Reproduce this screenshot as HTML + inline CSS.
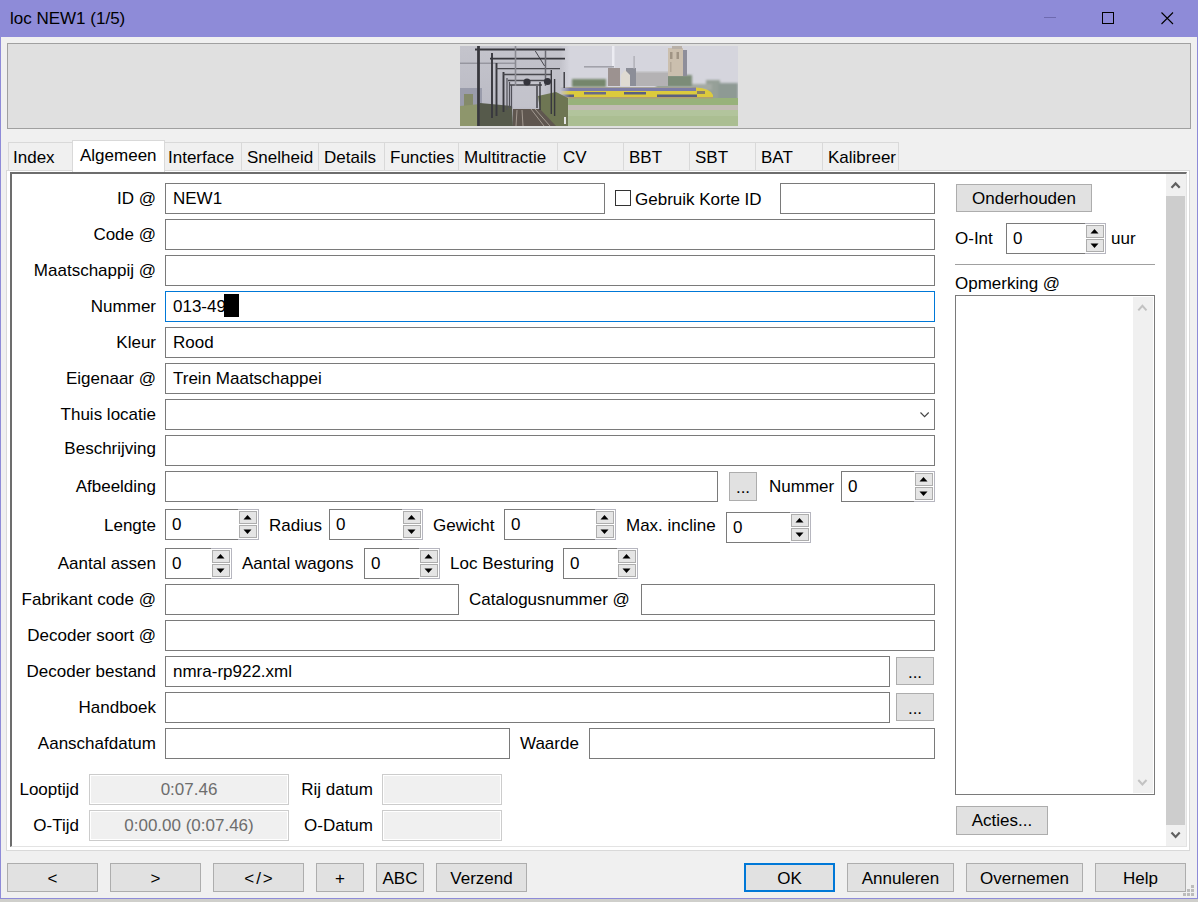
<!DOCTYPE html>
<html><head><meta charset="utf-8"><style>
html,body{margin:0;padding:0;width:1198px;height:902px;overflow:hidden;background:#f0f0f0}
body>div,body>svg,#r>div,#r>svg{position:absolute}
#r{position:absolute;left:0;top:0;width:1198px;height:902px;overflow:hidden}
#r div, #r svg{position:absolute}
#r div svg{position:static}
.t{font-family:"Liberation Sans",sans-serif;font-size:17.0px;line-height:20px;white-space:pre;color:#000}
</style></head><body><div id="r">
<div style="left:0px;top:0px;width:1198px;height:899px;background:#f0f0f0"></div>
<div style="left:0px;top:899px;width:1198px;height:3px;background:#cfcfcb"></div>
<div style="left:0px;top:0px;width:1198px;height:37px;background:#8e8bd8"></div>
<div style="left:0px;top:0px;width:1px;height:899px;background:#8e8bd8"></div>
<div style="left:1197px;top:0px;width:1px;height:899px;background:#8e8bd8"></div>
<div style="left:0px;top:898px;width:1198px;height:1px;background:#8e8bd8"></div>
<div class="t" style="left:10px;top:9px;color:#000;">loc NEW1 (1/5)</div>
<div style="left:1044px;top:17px;width:12px;height:1px;background:#6e6ab0"></div>
<div style="left:1102px;top:12px;width:12px;height:12px;border:1px solid #000;box-sizing:border-box"></div>
<svg style="left:1161px;top:12px" width="13" height="13"><path d="M0.5 0.5 L12 12 M12 0.5 L0.5 12" stroke="#000" stroke-width="1.1"/></svg>
<div style="left:7px;top:43px;width:1184px;height:86px;border:1px solid #a0a0a0;background:#e0e0e0;box-sizing:border-box"></div>
<div style="left:460px;top:46px;width:278px;height:80px;overflow:hidden"><svg width="278" height="80" viewBox="0 0 278 80">
<defs>
<linearGradient id="lsky" x1="0" y1="0" x2="0" y2="1"><stop offset="0" stop-color="#c4c4cc"/><stop offset="1" stop-color="#b8b8c2"/></linearGradient>
<linearGradient id="fade" x1="0" y1="0" x2="1" y2="0"><stop offset="0" stop-color="#c2c2ca" stop-opacity="1"/><stop offset="1" stop-color="#c2c2ca" stop-opacity="0"/></linearGradient>
<filter id="bl" x="0" y="0" width="100%" height="100%"><feGaussianBlur stdDeviation="0.55"/></filter>
<filter id="bl2" x="-20%" y="-20%" width="140%" height="140%"><feGaussianBlur stdDeviation="1.2"/></filter>
</defs>
<g filter="url(#bl)">
<rect width="278" height="80" fill="#d5d5dd"/>
<!-- right scene: distant trees -->
<g filter="url(#bl2)">
<rect x="112" y="33" width="34" height="8" fill="#74866c"/>
<rect x="196" y="29" width="36" height="12" fill="#7c8c78"/>
<rect x="246" y="34" width="14" height="20" fill="#96a098"/>
<rect x="258" y="37" width="20" height="17" fill="#8e9a94"/>
<rect x="232" y="38" width="20" height="6" fill="#a4aaa4"/>
</g>
<!-- church nave -->
<rect x="176" y="25" width="32" height="15" fill="#b4b2b4"/>
<rect x="176" y="25" width="32" height="1.5" fill="#c8c8cc"/>
<!-- tower -->
<rect x="208" y="2" width="15" height="28" fill="#cbbfae"/>
<rect x="223" y="4" width="4" height="26" fill="#8e8e9a"/>
<rect x="212" y="0" width="10" height="3" fill="#b8b0a8"/>
<rect x="210" y="6" width="2.5" height="7" fill="#a09484"/>
<rect x="216.5" y="6" width="2.5" height="7" fill="#a09484"/>
<rect x="210" y="16" width="1.5" height="10" fill="#b4a898"/>
<!-- windmill & church front -->
<rect x="148" y="22" width="12" height="18" fill="#9c9290"/>

<rect x="166" y="22" width="10" height="18" fill="#8c8e98"/>
<path d="M161 40 V29 L165 24 L170 29 V40 Z" fill="#dedad2"/>
<rect x="173.5" y="10" width="1.2" height="13" fill="#a8a8b0"/>
<rect x="152" y="0" width="2.5" height="22" fill="#ececf2"/>
<rect x="124" y="20" width="30" height="1.6" fill="#a2a2aa"/>
<!-- field -->
<rect x="96" y="52" width="182" height="7" fill="#98b27a"/>
<rect x="96" y="59" width="182" height="5" fill="#c2bcb4"/>
<rect x="96" y="64" width="182" height="16" fill="#b2c49c"/>
<rect x="96" y="70" width="182" height="10" fill="#a8bc8e" opacity="0.7"/>
<!-- train -->
<path d="M96 41.5 H236 Q250 42 253 49 V52 H96 Z" fill="#dcca3e"/>
<rect x="96" y="41.5" width="140" height="3.5" fill="#7c7ca6"/>
<rect x="96" y="48.5" width="18" height="2.5" fill="#5a5e80"/>
<rect x="164" y="46" width="22" height="2.5" fill="#5a5e80"/>
<rect x="197" y="48.5" width="40" height="2.5" fill="#5a5e80"/>
<rect x="124" y="46" width="22" height="2.5" fill="#6a6a88"/>
<rect x="237" y="45" width="8" height="3" fill="#8a8068"/>
<rect x="96" y="51" width="157" height="1.5" fill="#b0a070"/>
<!-- left scene -->
<rect x="0" y="0" width="100" height="80" fill="url(#lsky)"/>
<rect x="100" y="0" width="10" height="80" fill="url(#fade)"/>
<rect x="52" y="32" width="34" height="30" fill="#c8c8d0" opacity="0.6" filter="url(#bl2)"/>
<rect x="0" y="42" width="22" height="18" fill="#9a9cab"/>
<rect x="4" y="48" width="9" height="14" fill="#848a6a"/>
<path d="M0 60 L20 58 L20 80 L0 80 Z" fill="#8e966c"/>
<path d="M20 57 L52 60 L53 80 L20 80 Z" fill="#565a4c"/>
<path d="M78 50 L96 46 L108 52 L108 80 L92 80 L80 64 Z" fill="#6e7652"/>
<path d="M53 63 L80 63 L96 80 L53 80 Z" fill="#5e5650"/>
<path d="M57 64 L56 80 M62 64 L63 80 M71 63 L84 80 M75 63 L90 80" stroke="#aaa096" stroke-width="0.9"/>
<rect x="104" y="71" width="2" height="7" fill="#e4e4e4"/>
</g>
<g stroke="#38383e" fill="none">
<path d="M0 17.2 H56" stroke="#74747c" stroke-width="0.8"/>
<path d="M18.5 0 V80" stroke-width="2.8"/>
<path d="M32 7 V72 M36.5 17 V70 M43.5 26 V66" stroke-width="1.9"/>
<path d="M47 32 V64 M49.5 36 V62 M51.5 39 V62" stroke-width="1.2" stroke="#505058"/>
<path d="M15 3.5 H105" stroke-width="2.2"/>
<path d="M30 12.7 H105" stroke-width="1.8"/>
<path d="M36 22.7 H100 M43 28.5 H92 M48 34.5 H86 M50 39 H82" stroke-width="1.3" stroke="#48484e"/>
<path d="M85.5 4 V40" stroke="#6a6a72" stroke-width="1.5"/>
<path d="M91.3 24 V68 M94.6 33 V70 M104.2 26 V42 M80 36 V64 M77 40 V62" stroke-width="1.4"/>
<path d="M75.3 5 L84.6 20" stroke-width="0.9"/>
<path d="M55.5 0 V40" stroke="#8a8a92" stroke-width="1.6"/>
</g>
<circle cx="67" cy="36" r="3.6" fill="#34343c"/>
<circle cx="87.5" cy="35.5" r="3.6" fill="#34343c"/>
</svg>
</div>
<div style="left:8px;top:142px;width:65px;height:29px;border:1px solid #d9d9d9;background:#f0f0f0;box-sizing:border-box"></div>
<div style="left:164px;top:142px;width:78px;height:29px;border:1px solid #d9d9d9;background:#f0f0f0;box-sizing:border-box"></div>
<div style="left:241px;top:142px;width:78px;height:29px;border:1px solid #d9d9d9;background:#f0f0f0;box-sizing:border-box"></div>
<div style="left:318px;top:142px;width:67px;height:29px;border:1px solid #d9d9d9;background:#f0f0f0;box-sizing:border-box"></div>
<div style="left:384px;top:142px;width:75px;height:29px;border:1px solid #d9d9d9;background:#f0f0f0;box-sizing:border-box"></div>
<div style="left:458px;top:142px;width:100px;height:29px;border:1px solid #d9d9d9;background:#f0f0f0;box-sizing:border-box"></div>
<div style="left:557px;top:142px;width:67px;height:29px;border:1px solid #d9d9d9;background:#f0f0f0;box-sizing:border-box"></div>
<div style="left:623px;top:142px;width:67px;height:29px;border:1px solid #d9d9d9;background:#f0f0f0;box-sizing:border-box"></div>
<div style="left:689px;top:142px;width:67px;height:29px;border:1px solid #d9d9d9;background:#f0f0f0;box-sizing:border-box"></div>
<div style="left:755px;top:142px;width:68px;height:29px;border:1px solid #d9d9d9;background:#f0f0f0;box-sizing:border-box"></div>
<div style="left:822px;top:142px;width:77px;height:29px;border:1px solid #d9d9d9;background:#f0f0f0;box-sizing:border-box"></div>
<div style="left:6px;top:170px;width:1184px;height:681px;border:1px solid #d9d9d9;background:#fff;box-sizing:border-box"></div>
<div style="left:72px;top:140px;width:93px;height:32px;border:1px solid #d9d9d9;border-bottom:none;background:#fff;box-sizing:border-box"></div>
<div class="t" style="left:13px;top:148px;color:#000;">Index</div>
<div class="t" style="left:80px;top:146px;color:#000;">Algemeen</div>
<div class="t" style="left:168px;top:148px;color:#000;">Interface</div>
<div class="t" style="left:247px;top:148px;color:#000;">Snelheid</div>
<div class="t" style="left:324px;top:148px;color:#000;">Details</div>
<div class="t" style="left:390px;top:148px;color:#000;">Functies</div>
<div class="t" style="left:464px;top:148px;color:#000;">Multitractie</div>
<div class="t" style="left:563px;top:148px;color:#000;">CV</div>
<div class="t" style="left:629px;top:148px;color:#000;">BBT</div>
<div class="t" style="left:695px;top:148px;color:#000;">SBT</div>
<div class="t" style="left:761px;top:148px;color:#000;">BAT</div>
<div class="t" style="left:828px;top:148px;color:#000;">Kalibreer</div>
<div style="left:10px;top:172px;width:1177px;height:675px;border-top:2px solid #6d6d6d;border-left:2px solid #6d6d6d;border-right:1px solid #e3e3e3;border-bottom:1px solid #e3e3e3;background:#fff;box-sizing:border-box"></div>
<div style="left:1166px;top:174px;width:20px;height:672px;background:#f0f0f0"></div>
<div style="left:1166px;top:196px;width:19px;height:629px;background:#cdcdcd"></div>
<svg style="left:1166px;top:174px" width="20" height="22"><path d="M5.5 13.8 L9.6 9.4 L13.7 13.8" stroke="#606060" stroke-width="2.2" fill="none"/></svg>
<svg style="left:1166px;top:825px" width="20" height="21"><path d="M5.5 7.6 L9.6 12 L13.7 7.6" stroke="#606060" stroke-width="2.2" fill="none"/></svg>
<div class="t" style="right:1042px;top:189px;color:#000;">ID @</div>
<div class="t" style="right:1042px;top:225px;color:#000;">Code @</div>
<div class="t" style="right:1042px;top:261px;color:#000;">Maatschappij @</div>
<div class="t" style="right:1042px;top:297px;color:#000;">Nummer</div>
<div class="t" style="right:1042px;top:333px;color:#000;">Kleur</div>
<div class="t" style="right:1042px;top:369px;color:#000;">Eigenaar @</div>
<div class="t" style="right:1042px;top:405px;color:#000;">Thuis locatie</div>
<div class="t" style="right:1042px;top:439px;color:#000;">Beschrijving</div>
<div class="t" style="right:1042px;top:477px;color:#000;">Afbeelding</div>
<div style="left:165px;top:183px;width:440px;height:31px;border:1px solid #7a7a7a;background:#fff;box-sizing:border-box"></div>
<div class="t" style="left:173px;top:189px;color:#000;">NEW1</div>
<div style="left:615px;top:190px;width:16px;height:16px;border:1px solid #333;background:#fff;box-sizing:border-box"></div>
<div class="t" style="left:635px;top:190px;color:#000;">Gebruik Korte ID</div>
<div style="left:780px;top:183px;width:155px;height:31px;border:1px solid #7a7a7a;background:#fff;box-sizing:border-box"></div>
<div style="left:165px;top:219px;width:770px;height:31px;border:1px solid #7a7a7a;background:#fff;box-sizing:border-box"></div>
<div style="left:165px;top:255px;width:770px;height:31px;border:1px solid #7a7a7a;background:#fff;box-sizing:border-box"></div>
<div style="left:165px;top:291px;width:770px;height:31px;border:1px solid #0078d7;background:#fff;box-sizing:border-box"></div>
<div class="t" style="left:173px;top:297px;color:#000;">013-49</div>
<div style="left:224px;top:294px;width:15px;height:23px;background:#000"></div>
<div style="left:165px;top:327px;width:770px;height:31px;border:1px solid #7a7a7a;background:#fff;box-sizing:border-box"></div>
<div class="t" style="left:173px;top:333px;color:#000;">Rood</div>
<div style="left:165px;top:363px;width:770px;height:31px;border:1px solid #7a7a7a;background:#fff;box-sizing:border-box"></div>
<div class="t" style="left:173px;top:369px;color:#000;">Trein Maatschappei</div>
<div style="left:165px;top:399px;width:770px;height:31px;border:1px solid #7a7a7a;background:#fff;box-sizing:border-box"></div>
<svg style="left:918px;top:410px" width="13" height="9"><path d="M2.5 2.5 L6.6 6.6 L10.7 2.5" stroke="#444" stroke-width="1.15" fill="none"/></svg>
<div style="left:165px;top:435px;width:770px;height:31px;border:1px solid #7a7a7a;background:#fff;box-sizing:border-box"></div>
<div style="left:165px;top:471px;width:553px;height:31px;border:1px solid #7a7a7a;background:#fff;box-sizing:border-box"></div>
<div style="left:729px;top:472px;width:28px;height:29px;border:1px solid #adadad;background:#e1e1e1;box-sizing:border-box"></div>
<div class="t" style="left:443.0px;width:600px;text-align:center;top:478px;color:#000;">...</div>
<div class="t" style="left:769px;top:477px;color:#000;">Nummer</div>
<div style="left:841px;top:471px;width:94px;height:31px;border:1px solid #7a7a7a;background:#fff;box-sizing:border-box"></div>
<div style="left:914px;top:471px;width:21px;height:31px;border:1px solid #b6b6bf;border-left:none;background:#fff;box-sizing:border-box"></div>
<div style="left:915px;top:473px;width:18px;height:13px;border:1px solid #adadad;background:#e5e5e5;box-sizing:border-box"></div>
<div style="left:915px;top:487px;width:18px;height:13px;border:1px solid #adadad;background:#e5e5e5;box-sizing:border-box"></div>
<svg style="left:915px;top:473px" width="18" height="27"><path d="M4.5 8.5 L12.5 8.5 L8.5 4 Z" fill="#000"/><path d="M4.5 18.5 L12.5 18.5 L8.5 23 Z" fill="#000"/></svg>
<div class="t" style="left:848px;top:477px;color:#000;">0</div>
<div class="t" style="right:1042px;top:516px;color:#000;">Lengte</div>
<div style="left:165px;top:509px;width:94px;height:31px;border:1px solid #7a7a7a;background:#fff;box-sizing:border-box"></div>
<div style="left:238px;top:509px;width:21px;height:31px;border:1px solid #b6b6bf;border-left:none;background:#fff;box-sizing:border-box"></div>
<div style="left:239px;top:511px;width:18px;height:13px;border:1px solid #adadad;background:#e5e5e5;box-sizing:border-box"></div>
<div style="left:239px;top:525px;width:18px;height:13px;border:1px solid #adadad;background:#e5e5e5;box-sizing:border-box"></div>
<svg style="left:239px;top:511px" width="18" height="27"><path d="M4.5 8.5 L12.5 8.5 L8.5 4 Z" fill="#000"/><path d="M4.5 18.5 L12.5 18.5 L8.5 23 Z" fill="#000"/></svg>
<div class="t" style="left:172px;top:515px;color:#000;">0</div>
<div class="t" style="left:269px;top:516px;color:#000;">Radius</div>
<div style="left:329px;top:509px;width:94px;height:31px;border:1px solid #7a7a7a;background:#fff;box-sizing:border-box"></div>
<div style="left:402px;top:509px;width:21px;height:31px;border:1px solid #b6b6bf;border-left:none;background:#fff;box-sizing:border-box"></div>
<div style="left:403px;top:511px;width:18px;height:13px;border:1px solid #adadad;background:#e5e5e5;box-sizing:border-box"></div>
<div style="left:403px;top:525px;width:18px;height:13px;border:1px solid #adadad;background:#e5e5e5;box-sizing:border-box"></div>
<svg style="left:403px;top:511px" width="18" height="27"><path d="M4.5 8.5 L12.5 8.5 L8.5 4 Z" fill="#000"/><path d="M4.5 18.5 L12.5 18.5 L8.5 23 Z" fill="#000"/></svg>
<div class="t" style="left:336px;top:515px;color:#000;">0</div>
<div class="t" style="left:433px;top:516px;color:#000;">Gewicht</div>
<div style="left:504px;top:509px;width:112px;height:31px;border:1px solid #7a7a7a;background:#fff;box-sizing:border-box"></div>
<div style="left:595px;top:509px;width:21px;height:31px;border:1px solid #b6b6bf;border-left:none;background:#fff;box-sizing:border-box"></div>
<div style="left:596px;top:511px;width:18px;height:13px;border:1px solid #adadad;background:#e5e5e5;box-sizing:border-box"></div>
<div style="left:596px;top:525px;width:18px;height:13px;border:1px solid #adadad;background:#e5e5e5;box-sizing:border-box"></div>
<svg style="left:596px;top:511px" width="18" height="27"><path d="M4.5 8.5 L12.5 8.5 L8.5 4 Z" fill="#000"/><path d="M4.5 18.5 L12.5 18.5 L8.5 23 Z" fill="#000"/></svg>
<div class="t" style="left:511px;top:515px;color:#000;">0</div>
<div class="t" style="left:626px;top:516px;color:#000;">Max. incline</div>
<div style="left:726px;top:512px;width:85px;height:31px;border:1px solid #7a7a7a;background:#fff;box-sizing:border-box"></div>
<div style="left:790px;top:512px;width:21px;height:31px;border:1px solid #b6b6bf;border-left:none;background:#fff;box-sizing:border-box"></div>
<div style="left:791px;top:514px;width:18px;height:13px;border:1px solid #adadad;background:#e5e5e5;box-sizing:border-box"></div>
<div style="left:791px;top:528px;width:18px;height:13px;border:1px solid #adadad;background:#e5e5e5;box-sizing:border-box"></div>
<svg style="left:791px;top:514px" width="18" height="27"><path d="M4.5 8.5 L12.5 8.5 L8.5 4 Z" fill="#000"/><path d="M4.5 18.5 L12.5 18.5 L8.5 23 Z" fill="#000"/></svg>
<div class="t" style="left:733px;top:518px;color:#000;">0</div>
<div class="t" style="right:1042px;top:554px;color:#000;">Aantal assen</div>
<div style="left:165px;top:548px;width:67px;height:31px;border:1px solid #7a7a7a;background:#fff;box-sizing:border-box"></div>
<div style="left:211px;top:548px;width:21px;height:31px;border:1px solid #b6b6bf;border-left:none;background:#fff;box-sizing:border-box"></div>
<div style="left:212px;top:550px;width:18px;height:13px;border:1px solid #adadad;background:#e5e5e5;box-sizing:border-box"></div>
<div style="left:212px;top:564px;width:18px;height:13px;border:1px solid #adadad;background:#e5e5e5;box-sizing:border-box"></div>
<svg style="left:212px;top:550px" width="18" height="27"><path d="M4.5 8.5 L12.5 8.5 L8.5 4 Z" fill="#000"/><path d="M4.5 18.5 L12.5 18.5 L8.5 23 Z" fill="#000"/></svg>
<div class="t" style="left:172px;top:554px;color:#000;">0</div>
<div class="t" style="left:242px;top:554px;color:#000;">Aantal wagons</div>
<div style="left:364px;top:548px;width:76px;height:31px;border:1px solid #7a7a7a;background:#fff;box-sizing:border-box"></div>
<div style="left:419px;top:548px;width:21px;height:31px;border:1px solid #b6b6bf;border-left:none;background:#fff;box-sizing:border-box"></div>
<div style="left:420px;top:550px;width:18px;height:13px;border:1px solid #adadad;background:#e5e5e5;box-sizing:border-box"></div>
<div style="left:420px;top:564px;width:18px;height:13px;border:1px solid #adadad;background:#e5e5e5;box-sizing:border-box"></div>
<svg style="left:420px;top:550px" width="18" height="27"><path d="M4.5 8.5 L12.5 8.5 L8.5 4 Z" fill="#000"/><path d="M4.5 18.5 L12.5 18.5 L8.5 23 Z" fill="#000"/></svg>
<div class="t" style="left:371px;top:554px;color:#000;">0</div>
<div class="t" style="left:450px;top:554px;color:#000;">Loc Besturing</div>
<div style="left:563px;top:548px;width:75px;height:31px;border:1px solid #7a7a7a;background:#fff;box-sizing:border-box"></div>
<div style="left:617px;top:548px;width:21px;height:31px;border:1px solid #b6b6bf;border-left:none;background:#fff;box-sizing:border-box"></div>
<div style="left:618px;top:550px;width:18px;height:13px;border:1px solid #adadad;background:#e5e5e5;box-sizing:border-box"></div>
<div style="left:618px;top:564px;width:18px;height:13px;border:1px solid #adadad;background:#e5e5e5;box-sizing:border-box"></div>
<svg style="left:618px;top:550px" width="18" height="27"><path d="M4.5 8.5 L12.5 8.5 L8.5 4 Z" fill="#000"/><path d="M4.5 18.5 L12.5 18.5 L8.5 23 Z" fill="#000"/></svg>
<div class="t" style="left:570px;top:554px;color:#000;">0</div>
<div class="t" style="right:1042px;top:590px;color:#000;">Fabrikant code @</div>
<div style="left:165px;top:584px;width:294px;height:31px;border:1px solid #7a7a7a;background:#fff;box-sizing:border-box"></div>
<div class="t" style="left:469px;top:590px;color:#000;">Catalogusnummer @</div>
<div style="left:641px;top:584px;width:294px;height:31px;border:1px solid #7a7a7a;background:#fff;box-sizing:border-box"></div>
<div class="t" style="right:1042px;top:626px;color:#000;">Decoder soort @</div>
<div style="left:165px;top:620px;width:770px;height:31px;border:1px solid #7a7a7a;background:#fff;box-sizing:border-box"></div>
<div class="t" style="right:1042px;top:662px;color:#000;">Decoder bestand</div>
<div style="left:165px;top:656px;width:725px;height:31px;border:1px solid #7a7a7a;background:#fff;box-sizing:border-box"></div>
<div class="t" style="left:173px;top:662px;color:#000;">nmra-rp922.xml</div>
<div style="left:896px;top:657px;width:38px;height:28px;border:1px solid #adadad;background:#e1e1e1;box-sizing:border-box"></div>
<div class="t" style="left:615.0px;width:600px;text-align:center;top:663px;color:#000;">...</div>
<div class="t" style="right:1042px;top:698px;color:#000;">Handboek</div>
<div style="left:165px;top:692px;width:725px;height:31px;border:1px solid #7a7a7a;background:#fff;box-sizing:border-box"></div>
<div style="left:896px;top:693px;width:38px;height:28px;border:1px solid #adadad;background:#e1e1e1;box-sizing:border-box"></div>
<div class="t" style="left:615.0px;width:600px;text-align:center;top:699px;color:#000;">...</div>
<div class="t" style="right:1042px;top:734px;color:#000;">Aanschafdatum</div>
<div style="left:165px;top:728px;width:345px;height:31px;border:1px solid #7a7a7a;background:#fff;box-sizing:border-box"></div>
<div class="t" style="left:520px;top:734px;color:#000;">Waarde</div>
<div style="left:589px;top:728px;width:346px;height:31px;border:1px solid #7a7a7a;background:#fff;box-sizing:border-box"></div>
<div class="t" style="right:1119px;top:780px;color:#000;">Looptijd</div>
<div style="left:89px;top:774px;width:200px;height:31px;border:1px solid #cccccc;background:#f0f0f0;box-shadow:inset 0 0 0 1px #fff;box-sizing:border-box"></div>
<div class="t" style="left:-111.0px;width:600px;text-align:center;top:780px;color:#6d6d6d;">0:07.46</div>
<div class="t" style="right:825px;top:780px;color:#000;">Rij datum</div>
<div style="left:382px;top:774px;width:120px;height:31px;border:1px solid #cccccc;background:#f0f0f0;box-shadow:inset 0 0 0 1px #fff;box-sizing:border-box"></div>
<div class="t" style="right:1119px;top:816px;color:#000;">O-Tijd</div>
<div style="left:89px;top:810px;width:200px;height:31px;border:1px solid #cccccc;background:#f0f0f0;box-shadow:inset 0 0 0 1px #fff;box-sizing:border-box"></div>
<div class="t" style="left:-111.0px;width:600px;text-align:center;top:816px;color:#6d6d6d;">0:00.00 (0:07.46)</div>
<div class="t" style="right:825px;top:816px;color:#000;">O-Datum</div>
<div style="left:382px;top:810px;width:120px;height:31px;border:1px solid #cccccc;background:#f0f0f0;box-shadow:inset 0 0 0 1px #fff;box-sizing:border-box"></div>
<div style="left:956px;top:184px;width:136px;height:28px;border:1px solid #adadad;background:#e1e1e1;box-sizing:border-box"></div>
<div class="t" style="left:724.0px;width:600px;text-align:center;top:189px;color:#000;">Onderhouden</div>
<div class="t" style="left:955px;top:229px;color:#000;">O-Int</div>
<div style="left:1006px;top:223px;width:100px;height:31px;border:1px solid #7a7a7a;background:#fff;box-sizing:border-box"></div>
<div style="left:1085px;top:223px;width:21px;height:31px;border:1px solid #b6b6bf;border-left:none;background:#fff;box-sizing:border-box"></div>
<div style="left:1086px;top:225px;width:18px;height:13px;border:1px solid #adadad;background:#e5e5e5;box-sizing:border-box"></div>
<div style="left:1086px;top:239px;width:18px;height:13px;border:1px solid #adadad;background:#e5e5e5;box-sizing:border-box"></div>
<svg style="left:1086px;top:225px" width="18" height="27"><path d="M4.5 8.5 L12.5 8.5 L8.5 4 Z" fill="#000"/><path d="M4.5 18.5 L12.5 18.5 L8.5 23 Z" fill="#000"/></svg>
<div class="t" style="left:1013px;top:229px;color:#000;">0</div>
<div class="t" style="left:1111px;top:229px;color:#000;">uur</div>
<div style="left:955px;top:264px;width:200px;height:1px;background:#a0a0a0"></div>
<div class="t" style="left:955px;top:274px;color:#000;">Opmerking @</div>
<div style="left:955px;top:295px;width:200px;height:500px;border:1px solid #7a7a7a;background:#fff;box-sizing:border-box"></div>
<div style="left:1133px;top:297px;width:20px;height:496px;background:#f0f0f0"></div>
<svg style="left:1133px;top:296px" width="21" height="22"><path d="M5.3 14.3 L9.4 9.8 L13.5 14.3" stroke="#c2c2c2" stroke-width="2" fill="none"/></svg>
<svg style="left:1133px;top:772px" width="21" height="21"><path d="M5.3 8 L9.4 12.5 L13.5 8" stroke="#c2c2c2" stroke-width="2" fill="none"/></svg>
<div style="left:956px;top:806px;width:92px;height:29px;border:1px solid #adadad;background:#e1e1e1;box-sizing:border-box"></div>
<div class="t" style="left:702.0px;width:600px;text-align:center;top:811px;color:#000;">Acties...</div>
<div style="left:7px;top:863px;width:91px;height:29px;border:1px solid #adadad;background:#e1e1e1;box-sizing:border-box"></div>
<div class="t" style="left:-247.5px;width:600px;text-align:center;top:869px;color:#000;">&lt;</div>
<div style="left:110px;top:863px;width:91px;height:29px;border:1px solid #adadad;background:#e1e1e1;box-sizing:border-box"></div>
<div class="t" style="left:-144.5px;width:600px;text-align:center;top:869px;color:#000;">&gt;</div>
<div style="left:213px;top:863px;width:91px;height:29px;border:1px solid #adadad;background:#e1e1e1;box-sizing:border-box"></div>
<div class="t" style="left:-41.5px;width:600px;text-align:center;top:869px;color:#000;letter-spacing:2px;text-indent:2px">&lt;/&gt;</div>
<div style="left:316px;top:863px;width:48px;height:29px;border:1px solid #adadad;background:#e1e1e1;box-sizing:border-box"></div>
<div class="t" style="left:40.0px;width:600px;text-align:center;top:869px;color:#000;">+</div>
<div style="left:376px;top:863px;width:48px;height:29px;border:1px solid #adadad;background:#e1e1e1;box-sizing:border-box"></div>
<div class="t" style="left:100.0px;width:600px;text-align:center;top:869px;color:#000;">ABC</div>
<div style="left:436px;top:863px;width:91px;height:29px;border:1px solid #adadad;background:#e1e1e1;box-sizing:border-box"></div>
<div class="t" style="left:181.5px;width:600px;text-align:center;top:869px;color:#000;">Verzend</div>
<div style="left:744px;top:863px;width:91px;height:29px;border:2px solid #0078d7;background:#e1e1e1;box-sizing:border-box"></div>
<div class="t" style="left:489.5px;width:600px;text-align:center;top:869px;color:#000;">OK</div>
<div style="left:847px;top:863px;width:107px;height:29px;border:1px solid #adadad;background:#e1e1e1;box-sizing:border-box"></div>
<div class="t" style="left:600.5px;width:600px;text-align:center;top:869px;color:#000;">Annuleren</div>
<div style="left:966px;top:863px;width:117px;height:29px;border:1px solid #adadad;background:#e1e1e1;box-sizing:border-box"></div>
<div class="t" style="left:724.5px;width:600px;text-align:center;top:869px;color:#000;">Overnemen</div>
<div style="left:1095px;top:863px;width:91px;height:29px;border:1px solid #adadad;background:#e1e1e1;box-sizing:border-box"></div>
<div class="t" style="left:840.5px;width:600px;text-align:center;top:869px;color:#000;">Help</div>
<div style="left:1191px;top:885px;width:3px;height:3px;background:#bcbcbc"></div>
<div style="left:1187px;top:889px;width:3px;height:3px;background:#bcbcbc"></div>
<div style="left:1191px;top:889px;width:3px;height:3px;background:#bcbcbc"></div>
<div style="left:1183px;top:893px;width:3px;height:3px;background:#bcbcbc"></div>
<div style="left:1187px;top:893px;width:3px;height:3px;background:#bcbcbc"></div>
<div style="left:1191px;top:893px;width:3px;height:3px;background:#bcbcbc"></div>
</div></body></html>
